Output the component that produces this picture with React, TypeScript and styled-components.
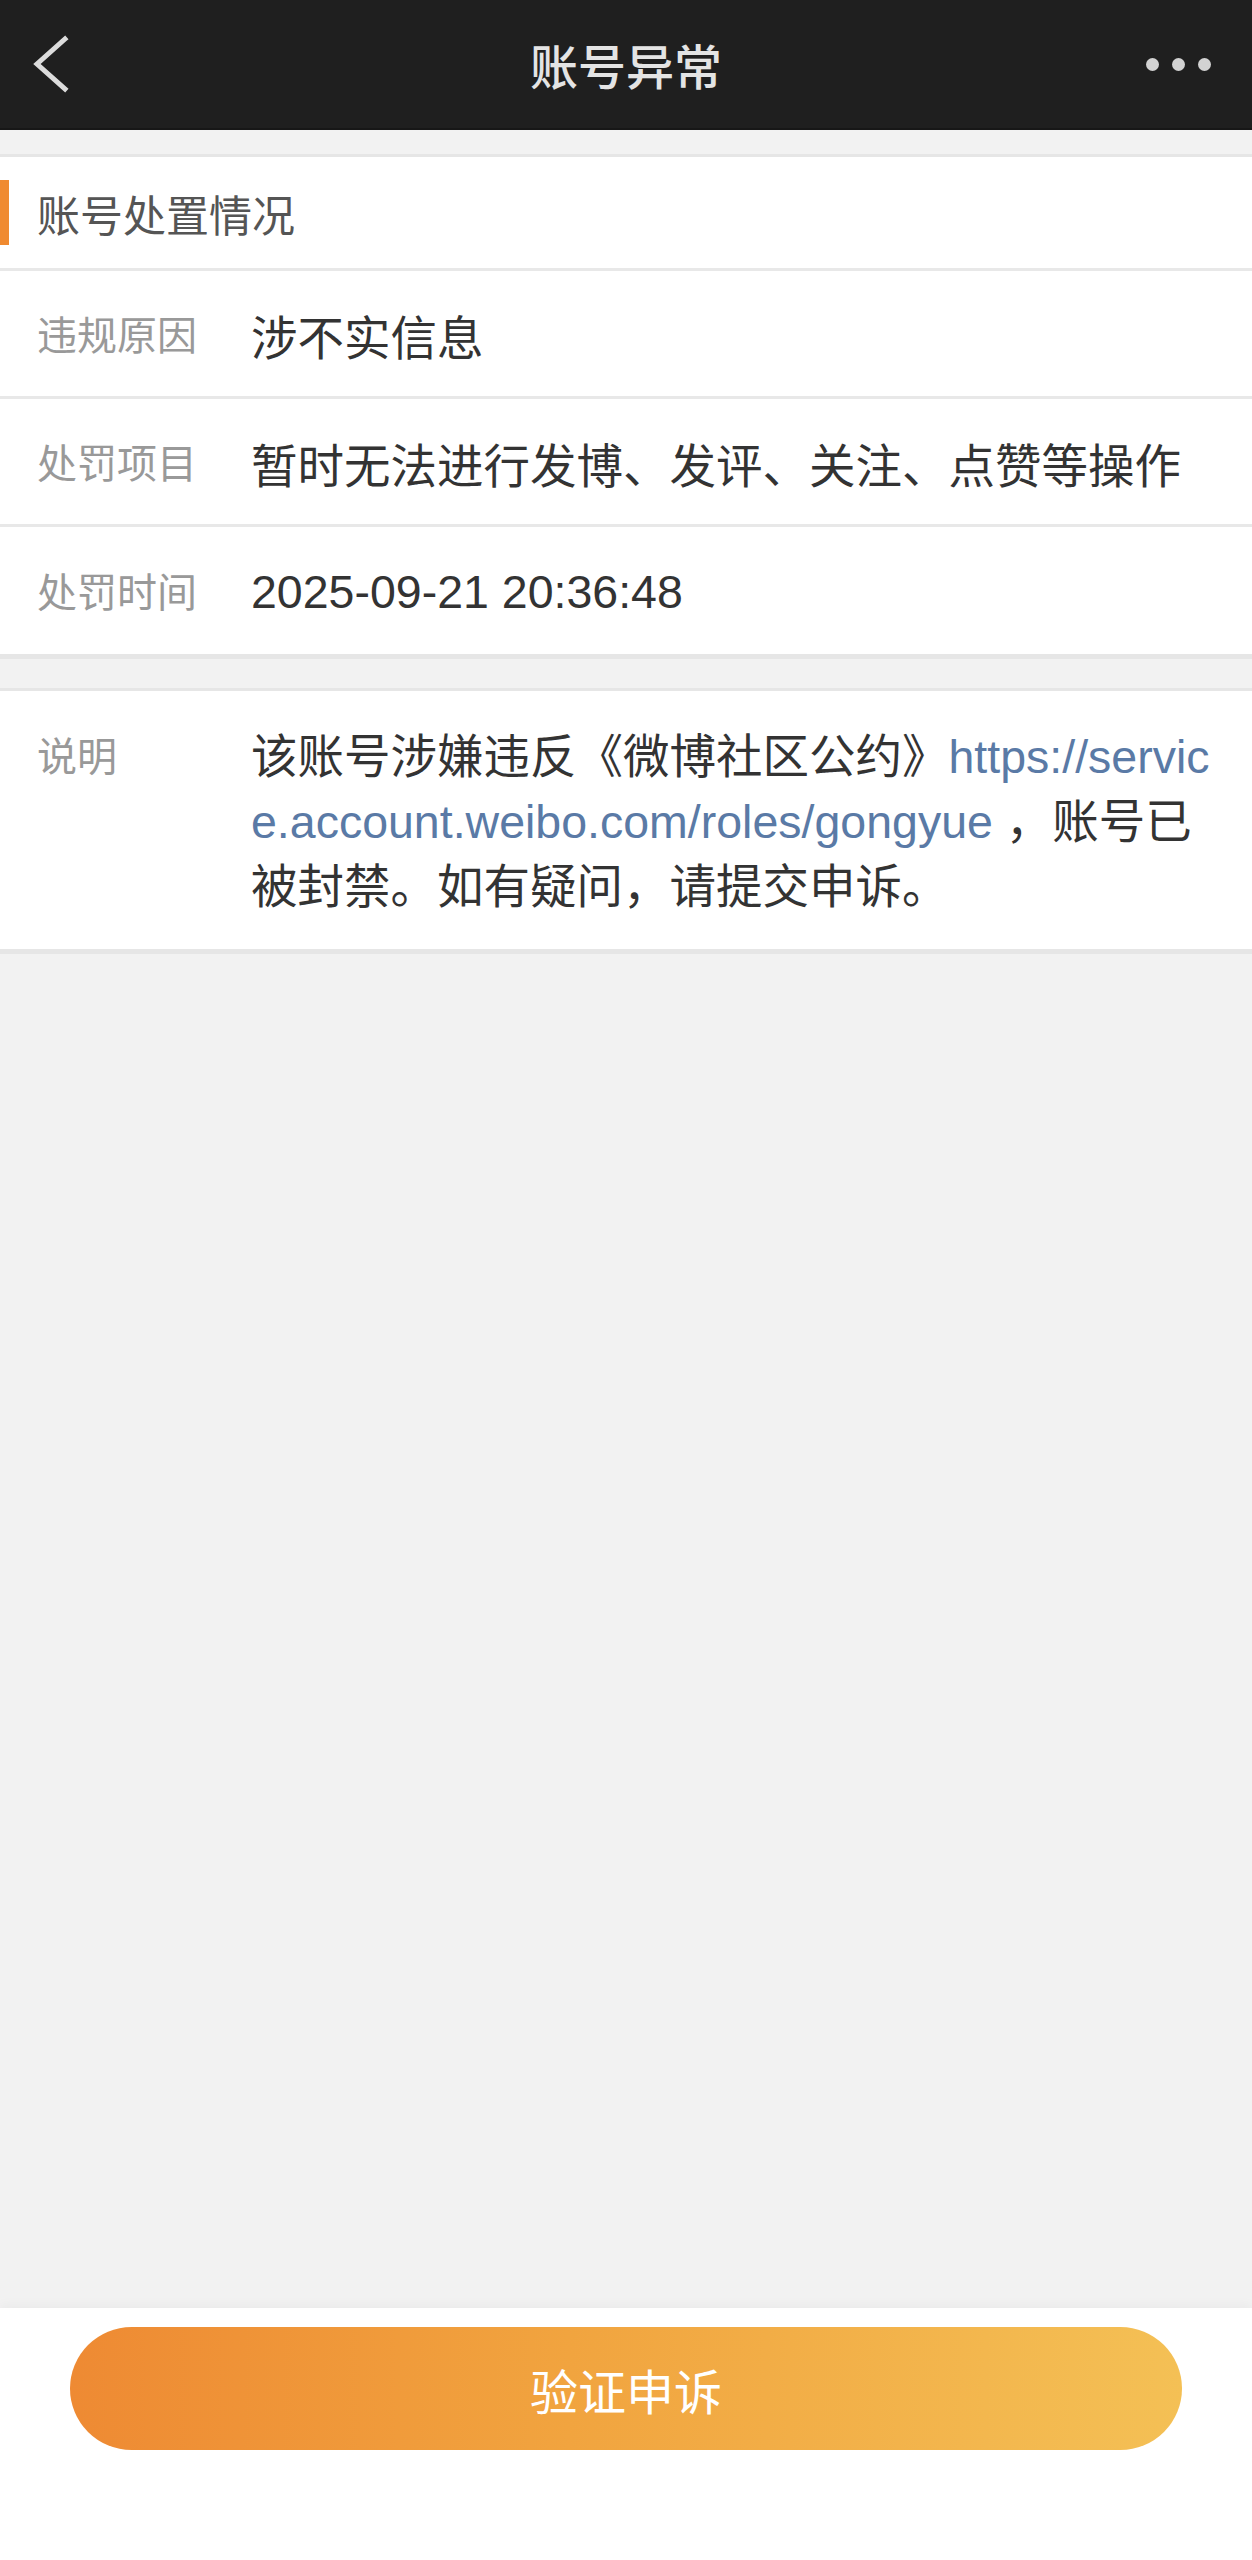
import React from "react";
import styled, { createGlobalStyle } from "styled-components";

const GlobalStyle = createGlobalStyle`
  html, body {
    margin: 0;
    padding: 0;
    background: #f2f2f2;
  }
  body {
    font-family: "Liberation Sans", "Noto Sans CJK SC", sans-serif;
  }
  * {
    box-sizing: border-box;
  }
`;

const Page = styled.div`
  min-height: 2560px;
  display: flex;
  flex-direction: column;
  background: #f2f2f2;
`;

const NavBar = styled.header`
  height: 130px;
  display: grid;
  grid-template-columns: 1fr auto 1fr;
  align-items: center;
  background: #1f1f1f;
  border-bottom: 2px solid #171717;
`;

const NavLeft = styled.div`
  display: flex;
  align-items: center;
  padding-left: 32px;
`;

const NavTitle = styled.h1`
  margin: 0;
  font-size: 48px;
  font-weight: 500;
  color: #e4e4e4;
  letter-spacing: 0;
`;

const NavRight = styled.div`
  display: flex;
  justify-content: flex-end;
  align-items: center;
  gap: 13px;
  padding-right: 41px;
`;

const Dot = styled.span`
  width: 13px;
  height: 13px;
  border-radius: 50%;
  background: #d2d2d2;
`;

const Card = styled.section<{ $top: number }>`
  margin-top: ${({ $top }) => $top}px;
  background: #fff;
  border-top: 3px solid #e6e6e6;
  border-bottom: 5px solid #e6e6e6;
`;

const SectionHead = styled.div`
  height: 114px;
  display: flex;
  align-items: center;
  gap: 28px;
  border-bottom: 3px solid #e8e8e8;
`;

const Accent = styled.span`
  width: 9px;
  height: 65px;
  background: #f08a30;
`;

const SectionTitle = styled.span`
  font-size: 43px;
  color: #555;
`;

const Row = styled.div<{ $last?: boolean }>`
  height: ${({ $last }) => ($last ? 127 : 128)}px;
  display: flex;
  align-items: center;
  padding: 0 37px;
  border-bottom: ${({ $last }) => ($last ? "none" : "3px solid #e8e8e8")};
`;

const Label = styled.span`
  width: 214px;
  flex-shrink: 0;
  font-size: 40px;
  color: #999;
  line-height: 65px;
`;

const RowLabel = styled(Label)`
  margin-top: 6px;
`;

const Value = styled.span`
  font-size: 46.5px;
  color: #333;
  white-space: nowrap;
  margin-top: 2px;
`;

const NoteRow = styled.div`
  display: flex;
  align-items: flex-start;
  padding: 34px 20px 29px 37px;
`;

const NoteText = styled.p`
  margin: 0;
  width: 970px;
  flex-shrink: 0;
  font-size: 46.5px;
  line-height: 65px;
  color: #333;
  word-break: break-all;
`;

const Link = styled.a`
  color: #5a7aa6;
  text-decoration: none;
`;

const Spacer = styled.div`
  flex: 1;
`;

const Footer = styled.footer`
  height: 252px;
  background: #fff;
  padding: 19px 70px 0;
  box-shadow: 0 -4px 10px rgba(0, 0, 0, 0.03);
`;

const AppealButton = styled.button`
  width: 100%;
  height: 123px;
  border: none;
  border-radius: 62px;
  background: linear-gradient(90deg, #ee8a33 0%, #f1a43f 45%, #f4c055 100%);
  color: #fff;
  font-family: "Liberation Sans", "Noto Sans CJK SC", sans-serif;
  font-size: 48px;
  cursor: pointer;
`;

const BackIcon = () => (
  <svg width="40" height="62" viewBox="0 0 40 62" fill="none">
    <polyline points="33,6 5,31 33,56" stroke="#dcdcdc" strokeWidth="5" strokeLinecap="square" strokeLinejoin="miter" />
  </svg>
);

const details = [
  { label: "违规原因", value: "涉不实信息" },
  { label: "处罚项目", value: "暂时无法进行发博、发评、关注、点赞等操作" },
  { label: "处罚时间", value: "2025-09-21 20:36:48" },
];

export default function App() {
  return (
    <>
      <GlobalStyle />
      <Page>
        <NavBar>
          <NavLeft>
            <BackIcon />
          </NavLeft>
          <NavTitle>账号异常</NavTitle>
          <NavRight>
            <Dot />
            <Dot />
            <Dot />
          </NavRight>
        </NavBar>

        <Card $top={24}>
          <SectionHead>
            <Accent />
            <SectionTitle>账号处置情况</SectionTitle>
          </SectionHead>
          {details.map((d, i) => (
            <Row key={d.label} $last={i === details.length - 1}>
              <RowLabel>{d.label}</RowLabel>
              <Value>{d.value}</Value>
            </Row>
          ))}
        </Card>

        <Card $top={29}>
          <NoteRow>
            <Label>说明</Label>
            <NoteText>
              该账号涉嫌违反《微博社区公约》
              <Link href="#">https://service.account.weibo.com/roles/gongyue</Link> ，账号已被封禁。如有疑问，请提交申诉。
            </NoteText>
          </NoteRow>
        </Card>

        <Spacer />

        <Footer>
          <AppealButton>验证申诉</AppealButton>
        </Footer>
      </Page>
    </>
  );
}
